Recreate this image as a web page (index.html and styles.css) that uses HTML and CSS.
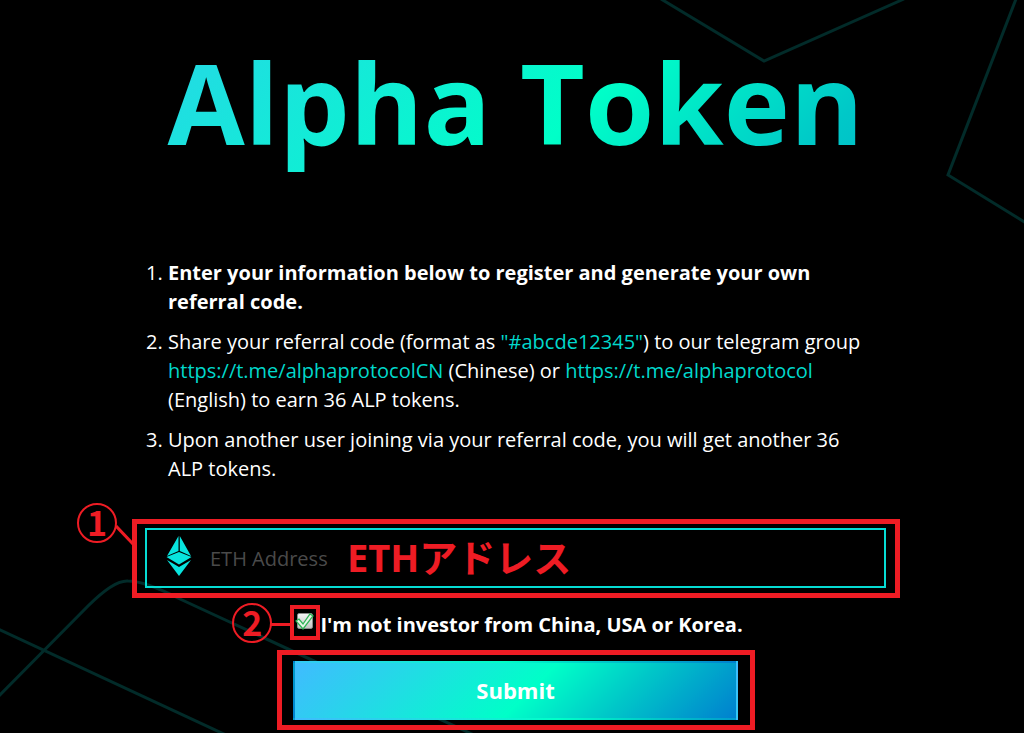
FILE: index.html
```html
<!DOCTYPE html>
<html lang="en">
<head>
    <meta charset="UTF-8">
    <meta name="viewport" content="width=device-width, initial-scale=1.0">
    <title>Alpha Token</title>
    <link rel="stylesheet" href="styles.css">
</head>
<body>
    <!-- Background lines -->
    <svg class="bg-lines" width="1024" height="733" viewBox="0 0 1024 733" aria-hidden="true">
        <path d="M661 -1 L764 61 L904 -1" />
        <path d="M1016 -1 L948 175 L1026 223" />
        <path d="M-2 629 L226 735" />
        <path d="M-2 697 L88 606 Q114 580 128 581 Q145 581 180 599 L474 735" />
    </svg>

    <div class="container">
        <h1>Alpha Token</h1>

        <ol class="steps">
            <li><strong>Enter your information below to register and generate your own referral code.</strong></li>
            <li>Share your referral code (format as <span class="code">"#abcde12345"</span>) to our telegram group <a href="https://t.me/alphaprotocolCN">https://t.me/alphaprotocolCN</a> (Chinese) or <a href="https://t.me/alphaprotocol">https://t.me/alphaprotocol</a> (English) to earn 36 ALP tokens.</li>
            <li>Upon another user joining via your referral code, you will get another 36 ALP tokens.</li>
        </ol>

        <form>
            <div class="field">
                <input type="text" id="eth-address" placeholder="ETH Address" aria-label="ETH Address">
                <svg class="eth-icon" width="26" height="40" viewBox="0 0 26 40" aria-hidden="true">
                    <path d="M12.5 0 V15 L1 20 Z M13.8 0 V15 L25 20 Z M13 16 L25.5 21 L13 28.5 L0.5 21 Z M1 24 L13 31 L25 24 L13 40 Z" />
                </svg>
                <span class="note">ETHアドレス</span>
                <span class="frame frame-field"></span>
                <span class="badge badge-one">1</span>
                <svg class="link-one" width="20" height="22" viewBox="0 0 20 22" aria-hidden="true">
                    <path d="M1 1 L18 19" />
                </svg>
            </div>

            <div class="agree">
                <span class="tick">
                    <input type="checkbox" id="agree" checked>
                    <svg class="tick-icon" width="20" height="18" viewBox="0 0 20 18" aria-hidden="true">
                        <path d="M1 8 L4 6 L8 11 L15 1 L18 3 L8 16 Z" />
                    </svg>
                    <span class="frame frame-tick"></span>
                    <span class="badge badge-two">2</span>
                    <span class="link-two"></span>
                </span>
                <label for="agree">I'm not investor from China, USA or Korea.</label>
            </div>

            <div class="submit">
                <button type="submit">Submit</button>
                <span class="frame frame-submit"></span>
            </div>
        </form>
    </div>
</body>
</html>
```

FILE: styles.css
```css
body {
    margin: 0;
    background-color: #000000;
    color: #ffffff;
    font-family: "Open Sans", "Noto Sans", "Noto Sans CJK JP", sans-serif;
    font-size: 20px;
    line-height: 29px;
    overflow-x: hidden;
}
.bg-lines {
    position: absolute;
    top: 0;
    left: 0;
    z-index: -1;
    fill: none;
    stroke: #022b29;
    stroke-width: 3px;
}
.container {
    max-width: 741px;
    margin: 0 auto;
    padding: 22px 0 12px 7px;
}
h1 {
    margin: 0;
    font-size: 112px;
    line-height: 160px;
    text-align: center;
    white-space: nowrap;
    color: transparent;
    background-image: linear-gradient(135deg, #28d5e8, #00ffc8 58%, #00c8c8 88%, #00bcc9);
    -webkit-background-clip: text;
    background-clip: text;
}
.steps {
    margin: 76px 0 45px;
    padding: 0 15px 0 23px;
}
.steps li {
    margin-bottom: 11px;
}
.steps a, .code {
    color: #00d8cc;
    text-decoration: none;
}
.field, .tick, .submit {
    position: relative;
}
.field input {
    display: block;
    box-sizing: border-box;
    width: 100%;
    height: 60px;
    padding: 0 20px 0 63px;
    border: 2px solid #06dcd4;
    background: transparent;
    color: #ffffff;
    font: inherit;
    outline: none;
}
.field input::placeholder {
    color: #4a4a4a;
    opacity: 1;
}
.eth-icon {
    position: absolute;
    top: 8px;
    left: 21px;
    fill: #08e4de;
}
.note {
    position: absolute;
    top: 0;
    left: 202px;
    color: #ee1c24;
    font-size: 38px;
    font-weight: bold;
    line-height: 58px;
}
/* red guide marks */
.frame {
    position: absolute;
    border: 5px solid #ee1c24;
    pointer-events: none;
}
.frame-field {
    inset: -9px -14px -10px -13px;
}
.frame-tick {
    inset: -8px -7px -11px -7px;
    border-width: 4px;
}
.frame-submit {
    inset: -11px -17px -10px -16px;
}
.badge {
    position: absolute;
    box-sizing: border-box;
    width: 40px;
    height: 40px;
    border: 2px solid #ee1c24;
    border-radius: 50%;
    color: #ee1c24;
    font-family: "Noto Sans CJK JP", sans-serif;
    font-size: 34px;
    font-weight: bold;
    line-height: 34px;
    text-align: center;
}
.badge-one {
    top: -25px;
    left: -68px;
}
.badge-two {
    top: -10px;
    left: -65px;
}
.link-one {
    position: absolute;
    top: -3px;
    left: -30px;
    fill: none;
    stroke: #ee1c24;
    stroke-width: 3px;
}
.link-two {
    position: absolute;
    top: 10px;
    left: -26px;
    width: 20px;
    height: 3px;
    background-color: #ee1c24;
}
.agree {
    display: flex;
    justify-content: center;
    align-items: flex-start;
    gap: 7px;
    margin: 22px 0;
    padding-left: 9px;
    font-weight: bold;
}
.tick {
    width: 16px;
    height: 16px;
    margin-top: 3px;
}
.tick input {
    appearance: none;
    display: block;
    width: 16px;
    height: 16px;
    margin: 0;
    border: 1px solid #8a8a8a;
    border-radius: 2px;
    background-image: linear-gradient(#f4f4f4, #c4c4c4);
}
.tick-icon {
    position: absolute;
    top: 0;
    left: -2px;
    fill: #e8f5e8;
    stroke: #2fb457;
    stroke-width: 1.3px;
    pointer-events: none;
}
.submit {
    width: 60%;
    margin: 0 auto;
}
button {
    display: block;
    width: 100%;
    height: 59px;
    border: 2px solid transparent;
    background-image: linear-gradient(135deg, #40bbff, #00ffc8 53%, #00c8c8 73%, #0080cf);
    color: #ffffff;
    font: inherit;
    font-size: 22px;
    font-weight: bold;
    cursor: pointer;
}
```
